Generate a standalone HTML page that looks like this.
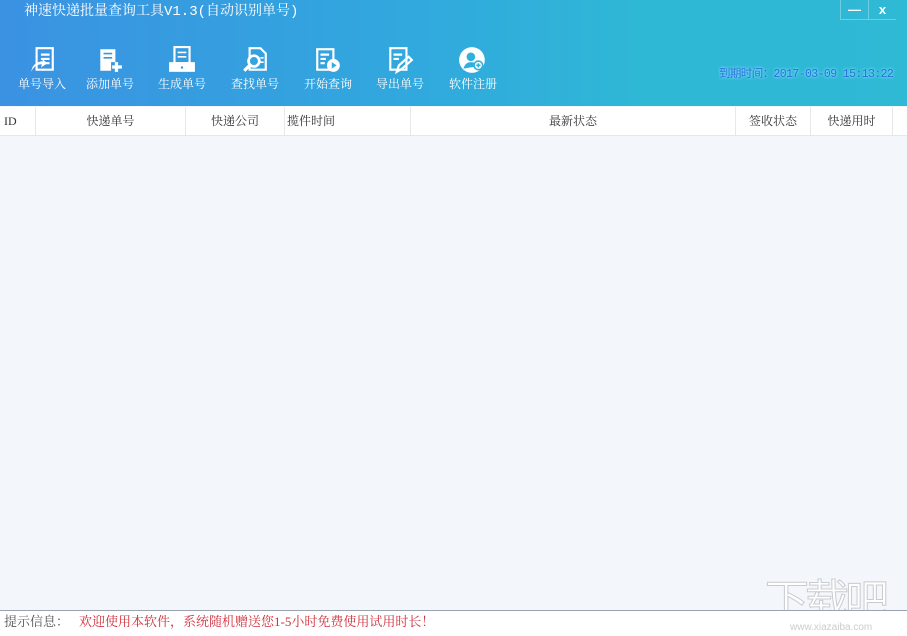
<!DOCTYPE html>
<html><head><meta charset="utf-8"><style>
*{margin:0;padding:0;box-sizing:border-box}
body{width:907px;height:636px;overflow:hidden;background:#f3f6fa;font-family:"Liberation Serif","Noto Serif CJK SC",serif;position:relative}
.hdr{position:absolute;left:0;top:0;width:907px;height:106px;background:linear-gradient(90deg,#3b92e2 0%,#31a8de 45%,#2fb7d6 70%,#2fb9d5 100%)}
.title{position:absolute;left:24px;top:0px;color:#fff;font-size:14px;font-family:"Liberation Mono","Noto Serif CJK SC",monospace}
.wb{position:absolute;top:0;width:28px;height:20px;border-left:1px solid rgba(255,255,255,.3);border-bottom:1px solid rgba(255,255,255,.3);color:#fff;font-size:13px;text-align:center;line-height:19px;font-weight:bold;font-family:"Liberation Sans",sans-serif}
.tb{position:absolute;top:46px;width:70px;text-align:center;color:#fff;font-size:12px;line-height:14px}
.tb svg{display:block;margin:0 auto 3px}
.exp{position:absolute;left:719px;top:65px;color:#2a6fd8;font-size:11.5px;font-family:"Liberation Mono","Noto Sans CJK SC",monospace;letter-spacing:-0.6px;text-shadow:0 0 3px #7fe0ff,0 0 2px #7fe0ff}
.th{position:absolute;top:107px;left:0;width:907px;height:29px;background:#fff;border-bottom:1px solid #e3e8ee;font-size:12px;color:#333}
.th div{position:absolute;top:0;height:28px;line-height:28px;text-align:center;border-right:1px solid #e8e8e8}
.sb{position:absolute;left:0;top:610px;width:907px;height:26px;background:#fff;border-top:1px solid #9aa3ae;font-size:13px;line-height:22px}
.wm{position:absolute;left:765px;top:572px;font-size:44px;color:#fff;-webkit-text-stroke:1px #c8ccd0;font-family:"Noto Sans CJK SC",sans-serif;letter-spacing:-4px;line-height:50px}
.wm2{position:absolute;left:790px;top:622px;font-size:10px;color:#ccc;font-family:"Liberation Sans",sans-serif}
</style></head><body>
<div class="hdr">
<div class="title">神速快递批量查询工具V1.3(自动识别单号)</div>
<div class="wb" style="left:840px">—</div>
<div class="wb" style="left:868px">x</div>
<div class="tb" style="left:7px"><svg width="28" height="28" viewBox="0 0 26 26"><rect x="8" y="2" width="15" height="20" fill="none" stroke="#fff" stroke-width="2"/><path d="M12 8h8M12 12h8M12 16h8" stroke="#fff" stroke-width="2"/><path d="M3 24q1-9 11-10l-2-3 6 5-6 4 1-3q-7 0-10 7z" fill="#fff"/></svg>单号导入</div>
<div class="tb" style="left:75px"><svg width="28" height="28" viewBox="0 0 26 26"><path d="M4 3h14v12h-4v8H4z" fill="#fff"/><path d="M7 7h8M7 11h8" stroke="#3a95e0" stroke-width="1.5"/><path d="M19 15v9M15 19.5h9" stroke="#fff" stroke-width="3"/></svg>添加单号</div>
<div class="tb" style="left:147px"><svg width="28" height="28" viewBox="0 0 26 26"><rect x="6" y="1" width="14" height="15" fill="none" stroke="#fff" stroke-width="2"/><path d="M9 6h8M9 10h8" stroke="#fff" stroke-width="1.5"/><rect x="1" y="15" width="24" height="9" fill="#fff"/><rect x="12" y="19" width="2" height="2" fill="#3a95e0"/></svg>生成单号</div>
<div class="tb" style="left:220px"><svg width="28" height="28" viewBox="0 0 26 26"><path d="M8 2h10l5 5v15H8z" fill="none" stroke="#fff" stroke-width="2"/><circle cx="12" cy="14" r="5" fill="#35a5df" stroke="#fff" stroke-width="2.5"/><path d="M8 18l-5 5" stroke="#fff" stroke-width="3"/><path d="M18 11h3M18 15h3" stroke="#fff" stroke-width="1.5"/></svg>查找单号</div>
<div class="tb" style="left:293px"><svg width="28" height="28" viewBox="0 0 26 26"><rect x="3" y="3" width="15" height="19" fill="none" stroke="#fff" stroke-width="2"/><path d="M6 8h8M6 12h5M6 16h4" stroke="#fff" stroke-width="2"/><circle cx="18" cy="18" r="6" fill="#fff"/><path d="M16.5 15v6l4.5-3z" fill="#33abdc"/></svg>开始查询</div>
<div class="tb" style="left:365px"><svg width="28" height="28" viewBox="0 0 26 26"><rect x="4" y="2" width="15" height="20" fill="none" stroke="#fff" stroke-width="2"/><path d="M7 8h8M7 12h5" stroke="#fff" stroke-width="2"/><path d="M10 24l2-6 9-8 3 3-9 8z" fill="none" stroke="#fff" stroke-width="2"/></svg>导出单号</div>
<div class="tb" style="left:438px"><svg width="30" height="28" viewBox="0 0 28 26"><circle cx="13" cy="13" r="12" fill="#fff"/><circle cx="12" cy="10" r="4" fill="#31b0da"/><path d="M5 21q2-6 7-6t6 4" fill="#31b0da"/><circle cx="19" cy="18" r="4" fill="#fff" stroke="#31b0da" stroke-width="1.5"/><path d="M19 16v4M17 18h4" stroke="#31b0da" stroke-width="1.5"/></svg>软件注册</div>
<div class="exp">到期时间：2017-03-09 15:13:22</div>
</div>
<div class="th">
<div style="left:0;width:36px;text-align:left;padding-left:4px">ID</div>
<div style="left:36px;width:150px">快递单号</div>
<div style="left:186px;width:99px">快递公司</div>
<div style="left:285px;width:126px;text-align:left;padding-left:2px">揽件时间</div>
<div style="left:411px;width:325px">最新状态</div>
<div style="left:736px;width:75px">签收状态</div>
<div style="left:811px;width:82px">快递用时</div>
</div>
<div class="wm">下载吧</div>
<div class="sb"><span style="color:#555;margin-left:4px">提示信息：</span><span style="color:#d0303c;margin-left:10px">欢迎使用本软件，系统随机赠送您1-5小时免费使用试用时长！</span></div>
<div class="wm2">www.xiazaiba.com</div>
</body></html>
